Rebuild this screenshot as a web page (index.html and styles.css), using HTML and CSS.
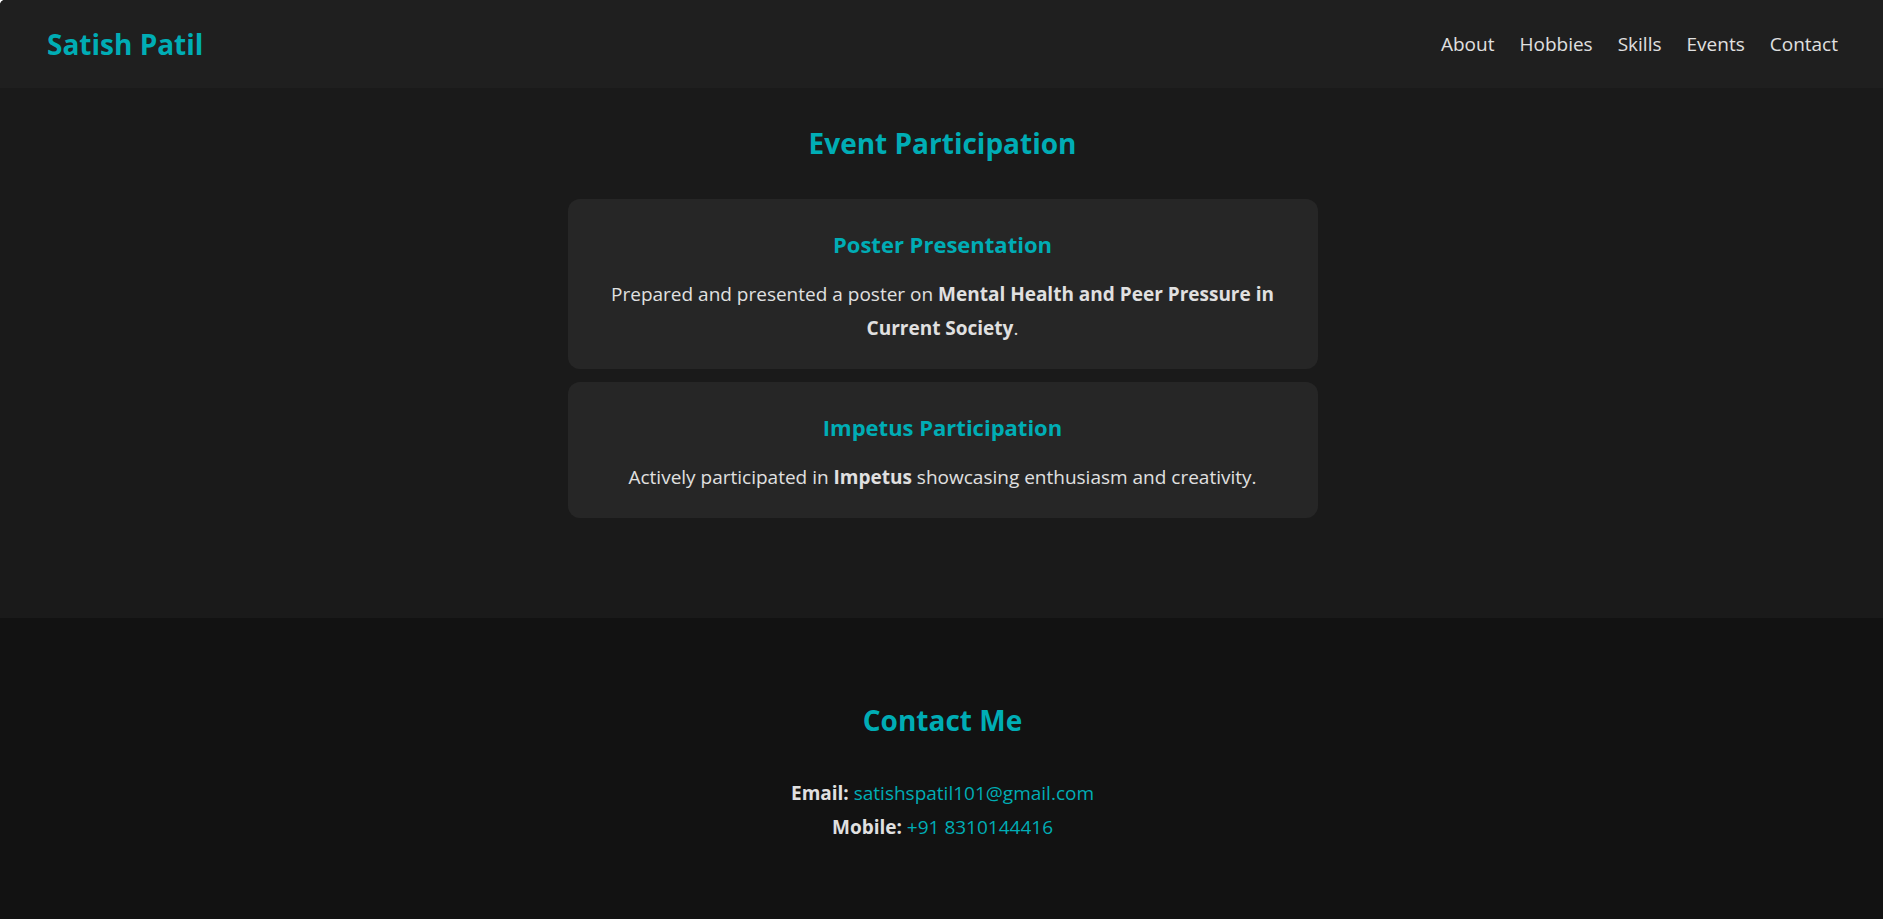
FILE: index.html
```html
<!DOCTYPE html>
<html lang="en">
<head>
<meta charset="utf-8">
<meta name="viewport" content="width=device-width, initial-scale=1">
<title>Satish Patil</title>
<link rel="stylesheet" href="styles.css">
</head>
<body>
<div class="page">
  <header class="header">
    <h1 class="brand">Satish Patil</h1>
    <nav class="nav">
      <a class="nav-link" href="#about">About</a>
      <a class="nav-link" href="#hobbies">Hobbies</a>
      <a class="nav-link" href="#skills">Skills</a>
      <a class="nav-link" href="#events">Events</a>
      <a class="nav-link" href="#contact">Contact</a>
    </nav>
  </header>
  <main class="main">
    <section class="events" id="events">
      <h2 class="section-title">Event Participation</h2>
      <div class="card-list">
        <article class="card">
          <h3 class="card-title">Poster Presentation</h3>
          <p class="text">Prepared and presented a poster on <strong>Mental Health and Peer Pressure in Current Society</strong>.</p>
        </article>
        <article class="card">
          <h3 class="card-title">Impetus Participation</h3>
          <p class="text">Actively participated in <strong>Impetus</strong> showcasing enthusiasm and creativity.</p>
        </article>
      </div>
    </section>
    <section class="contact" id="contact">
      <h2 class="section-title">Contact Me</h2>
      <p class="text"><strong>Email:</strong> <a class="contact-link" href="mailto:satishspatil101@gmail.com">satishspatil101@gmail.com</a></p>
      <p class="text"><strong>Mobile:</strong> <a class="contact-link" href="tel:+918310144416">+91 8310144416</a></p>
    </section>
  </main>
</div>
</body>
</html>
```
FILE: styles.css
```css
* {
  box-sizing: border-box;
  margin: 0;
  padding: 0;
}

html {
  background: #fff;
}

.page {
  display: flex;
  flex-direction: column;
  min-height: 100vh;
  overflow: hidden;
  border-top-left-radius: 5px;
  background: #121212;
  color: #e0e0e0;
  font-family: "Segoe UI", "Open Sans", "Noto Sans", sans-serif;
  font-size: 19px;
  line-height: 34px;
}

.header {
  display: flex;
  align-items: center;
  justify-content: space-between;
  padding: 18px 45px 18px 47px;
  background: #1f1f1f;
}

.brand {
  color: #00adb5;
  font-size: 28px;
  font-weight: 700;
  line-height: 52px;
}

.nav {
  display: flex;
  gap: 25px;
}

.nav-link {
  color: #e0e0e0;
  text-decoration: none;
}

.main {
  display: flex;
  flex: 1;
  flex-direction: column;
}

.events {
  padding: 29px 24px 100px 26px;
  background: #1a1a1a;
  text-align: center;
}

.section-title {
  margin-bottom: 30px;
  color: #00adb5;
  font-size: 28px;
  font-weight: 700;
  line-height: 52px;
}

.card-list {
  display: grid;
  gap: 13px;
  max-width: 750px;
  margin: 0 auto;
}

.card {
  padding: 24px;
  border-radius: 12px;
  background: #262626;
}

.card-title {
  margin-bottom: 12px;
  color: #00adb5;
  font-size: 22px;
  font-weight: 700;
  line-height: 42px;
}

.contact {
  flex: 1;
  padding: 76px 24px 64px 26px;
  background: #121212;
  text-align: center;
}

.contact-link {
  color: #00adb5;
  text-decoration: none;
}
```
